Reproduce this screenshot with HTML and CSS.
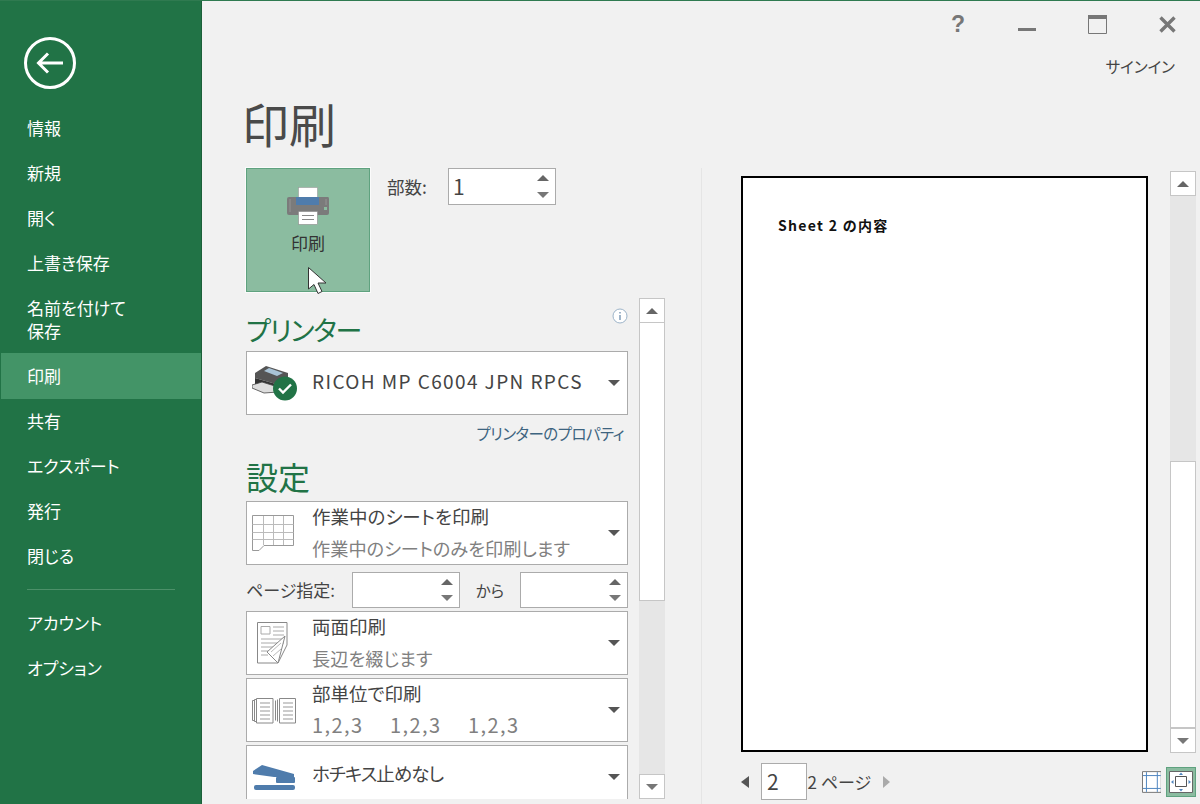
FILE: index.html
```html
<!DOCTYPE html>
<html lang="ja">
<head>
<meta charset="UTF-8">
<title>印刷</title>
<link rel="stylesheet" href="styles.css">
</head>
<body>
<nav class="side">
    <div class="back">
        <svg width="54" height="54" viewBox="0 0 54 54"><circle cx="27" cy="27" r="24.5" fill="none" stroke="#fff" stroke-width="3"/><path d="M15 27H40M25 17.5L15.500 27L25 36.500" fill="none" stroke="#fff" stroke-width="3"/></svg>
    </div>
    <a class="nav-item">情報</a>
    <a class="nav-item">新規</a>
    <a class="nav-item">開く</a>
    <a class="nav-item">上書き保存</a>
    <a class="nav-item two">名前を付けて<br>保存</a>
    <a class="nav-item on">印刷</a>
    <a class="nav-item">共有</a>
    <a class="nav-item">エクスポート</a>
    <a class="nav-item">発行</a>
    <a class="nav-item">閉じる</a>
    <div class="nav-sep"></div>
    <a class="nav-item">アカウント</a>
    <a class="nav-item">オプション</a>
</nav>

<main class="main">
    <div class="winbar">
        <span class="win-help">?</span>
        <svg class="win-min" width="18" height="3"><rect width="18" height="3" fill="#777"/></svg>
        <svg class="win-max" width="19" height="19" viewBox="0 0 19 19"><path d="M.5 .5H18.500V18.500H.5Z" fill="none" stroke="#777"/><rect width="19" height="4" fill="#777"/></svg>
        <svg class="win-close" width="17" height="17" viewBox="0 0 17 17"><path d="M1.500 1.500L15.500 15.500M15.500 1.500L1.500 15.500" stroke="#777" stroke-width="3.400"/></svg>
    </div>
    <div class="signin">サインイン</div>
    <h1 class="title">印刷</h1>

    <div class="body">
        <section class="left">
            <div class="print-row">
                <button class="print-btn" type="button">
                    <svg width="42" height="38" viewBox="0 0 42 38">
                        <rect x="11.500" y=".5" width="19" height="12" fill="#fff" stroke="#999" stroke-width=".6"/>
                        <path d="M2 10H41Q42 10 42 12V26Q42 28 40 28H2Q0 28 0 26V12Q0 10 2 10Z" fill="#7b7b7b"/>
                        <path d="M3 12V25M39 12V18" stroke="#959595"/>
                        <rect x="9" y="10" width="23" height="8" fill="#4f7cac"/>
                        <rect x="37" y="20" width="3" height="3" fill="#8bbca0"/>
                        <rect x="11.500" y="24.500" width="19" height="13" fill="#fff" stroke="#888" stroke-width=".6"/>
                        <path d="M15 28.500H27M15 32.500H27" stroke="#888"/>
                    </svg>
                    <span>印刷</span>
                </button>
                <label class="copies-label">部数:</label>
                <div class="spin copies"><span class="spin-val">1</span><span class="spin-btns"><i class="tri-up"></i><i class="tri-down"></i></span></div>
            </div>
            <div class="panel">
                <div class="settings">
                    <div class="head-row">
                        <h2 class="sub">プリンター</h2>
                        <svg class="info" width="16" height="16" viewBox="0 0 16 16"><circle cx="8" cy="8" r="7" fill="#fff" stroke="#9db4c9"/><path d="M8 7V12M8 4V5.500" stroke="#6f8fae" stroke-width="1.300"/></svg>
                    </div>
                    <div class="drop printer">
                        <div class="drop-icon">
                            <svg width="46" height="36" viewBox="0 0 46 36">
                                <path d="M3 8L14 1L36 8V15L24 19L3 13Z" fill="#555"/>
                                <path d="M12 6L17 3L31 8L25 11Z" fill="#a9c3d6"/>
                                <path d="M3 13L24 19V22L14 24L3 20Z" fill="#333"/>
                                <path d="M0 20L10 17L26 22V27L12 28L0 23Z" fill="#ddd" stroke="#444" stroke-width=".8"/>
                                <circle cx="33" cy="23.500" r="12" fill="#217346"/>
                                <path d="M27 23.500L31 27.500L39 19.500" fill="none" stroke="#fff" stroke-width="2.400"/>
                            </svg>
                        </div>
                        <div class="drop-text"><div class="line1 wide">RICOH MP C6004 JPN RPCS</div></div>
                        <i class="caret"></i>
                    </div>
                    <div class="link-row"><a class="link">プリンターのプロパティ</a></div>
                    <h2 class="sub sub-set">設定</h2>
                    <div class="drop">
                        <div class="drop-icon">
                            <svg width="42" height="36" viewBox="0 0 42 36">
                                <path d="M.5 .5H41.500V30.500H12L7 35.500H.5Z" fill="#fff" stroke="#999"/>
                                <path d="M.5 9.500H41.500M.5 17.500H41.500M.5 24.500H41.500" stroke="#bbb"/>
                                <path d="M11.500 1V30M21.500 1V30M31.500 1V30" stroke="#bbb"/>
                            </svg>
                        </div>
                        <div class="drop-text"><div class="line1">作業中のシートを印刷</div><div class="line2">作業中のシートのみを印刷します</div></div>
                        <i class="caret"></i>
                    </div>
                    <div class="page-row">
                        <span class="page-label">ページ指定:</span>
                        <div class="spin range"><span class="spin-val"></span><span class="spin-btns"><i class="tri-up"></i><i class="tri-down"></i></span></div>
                        <span class="kara">から</span>
                        <div class="spin range"><span class="spin-val"></span><span class="spin-btns"><i class="tri-up"></i><i class="tri-down"></i></span></div>
                    </div>
                    <div class="drop">
                        <div class="drop-icon duplex">
                            <svg width="32" height="44" viewBox="0 0 32 44">
                                <path d="M1.500 1.500H31V24L22 42H1.500Z" fill="#fff" stroke="#888"/>
                                <path d="M5 5.500H14V13H5Z" fill="none" stroke="#aaa"/>
                                <path d="M17 6H28M17 10H28M17 14H28M5 18H28M5 22H28M5 26H20M5 30H14M5 34H12" stroke="#aaa"/>
                                <path d="M11 31L29 15L22 42Z" fill="#fff" stroke="#888"/>
                                <path d="M15 31L25 22M17 35L25 28" stroke="#bbb"/>
                            </svg>
                        </div>
                        <div class="drop-text"><div class="line1">両面印刷</div><div class="line2">長辺を綴じます</div></div>
                        <i class="caret"></i>
                    </div>
                    <div class="drop">
                        <div class="drop-icon">
                            <svg width="44" height="27" viewBox="0 0 44 27">
                                <path d="M.5 3.500H2.500M.5 3.500V23.500H2.500M2.500 2.500H4.500M2.500 2.500V24.500H4.500" fill="none" stroke="#888"/>
                                <path d="M4.500 1.500H21V26H4.500Z" fill="#fff" stroke="#888"/>
                                <path d="M23.500 3.500V23.500M25.500 2.500V24.500" stroke="#888"/>
                                <path d="M27.500 1.500H43.500V26H27.500Z" fill="#fff" stroke="#888"/>
                                <path d="M8 6H18M8 10H18M8 14H18M8 18H18M8 22H18M31 6H41M31 10H41M31 14H41M31 18H41M31 22H41" stroke="#999"/>
                            </svg>
                        </div>
                        <div class="drop-text"><div class="line1">部単位で印刷</div><div class="line2 nums"><span>1,2,3</span><span>1,2,3</span><span>1,2,3</span></div></div>
                        <i class="caret"></i>
                    </div>
                    <div class="drop staple">
                        <div class="drop-icon">
                            <svg width="44" height="25" viewBox="0 0 44 25">
                                <path d="M1 6L10 0L42 9V12H22L1 9Z" fill="#4f7cac"/>
                                <rect x="24" y="12" width="19" height="6" rx="1" fill="#4f7cac"/>
                                <rect x="2" y="20" width="41" height="5" rx="2" fill="#4f7cac"/>
                            </svg>
                        </div>
                        <div class="drop-text"><div class="line1">ホチキス止めなし</div></div>
                        <i class="caret"></i>
                    </div>
                </div>
                <div class="vscroll panel-scroll">
                    <div class="sb-btn"><i class="tri-up"></i></div>
                    <div class="sb-thumb"></div>
                    <div class="sb-track"></div>
                    <div class="sb-btn"><i class="tri-down"></i></div>
                </div>
            </div>
        </section>

        <div class="divider"></div>

        <section class="preview">
            <div class="preview-top">
                <div class="sheet"><p class="sheet-text">Sheet 2 の内容</p></div>
                <div class="vscroll sheet-scroll">
                    <div class="sb-btn"><i class="tri-up"></i></div>
                    <div class="sb-track"></div>
                    <div class="sb-thumb"></div>
                    <div class="sb-btn"><i class="tri-down"></i></div>
                </div>
            </div>
            <div class="pager">
                <i class="arrow-left"></i>
                <div class="page-input">2</div>
                <span class="page-total">2 ページ</span>
                <i class="arrow-right"></i>
                <svg class="margins" width="20" height="22" viewBox="0 0 20 22"><path d="M.5 .5H19.500V21.500H.5Z" fill="#fff" stroke="#777"/><path d="M4.500 1V21M15.500 1V21M1 4.500H19M1 17.500H19" stroke="#4f86c0"/></svg>
                <div class="fit">
                    <svg width="24" height="22" viewBox="0 0 24 22"><path d="M.5 .5H23.500V21.500H.5Z" fill="#fff" stroke="#666"/><path d="M6.500 5.500H17.500V15.500H6.500Z" fill="none" stroke="#555"/><path d="M12 1.500L10 4H14ZM12 20.500L10 18H14ZM2 11L4.500 9V13ZM22 11L19.500 9V13Z" fill="#4f86c0"/></svg>
                </div>
            </div>
        </section>
    </div>

    <svg class="cursor" width="22" height="30" viewBox="0 0 22 30"><path d="M1.500 1.500V23L7 18.500L11 27.500L15 25.500L11 17H19Z" fill="#fff" stroke="#333"/></svg>
</main>
</body>
</html>
```

FILE: styles.css
```css
*{box-sizing:border-box;}
html,body{height:100%;}
body{
    margin:0;
    display:flex;
    overflow:hidden;
    height:804px;
    background:#f1f1f1;
    font-family:"Noto Sans CJK JP","Noto Sans",sans-serif;
    font-feature-settings:"palt";
    color:#444;
    border-top:1px solid #2f7a50;
}
i{display:block;}

/* sidebar */
.side{
    width:202px;
    flex:none;
    background:#217346;
    border-right:1px solid #1b6039;
    color:#fff;
}
.back{padding:35px 0 0 23px;height:105px;}
.nav-item{
    display:block;
    height:45px;
    padding-left:27px;
    font-size:17px;
    line-height:43px;
    color:#fff;
    white-space:nowrap;
}
.nav-item.two{height:67px;padding-top:10px;line-height:23px;}
.nav-item.on{background:#439467;margin-left:1px;padding-left:26px;height:46px;line-height:45px;}
.nav-sep{height:1px;margin:10px 26px 11px 27px;background:#4c9069;}

/* main */
.main{flex:1;position:relative;min-width:0;}
.winbar{display:flex;align-items:flex-start;height:47px;position:relative;padding-left:749px;}
.win-help{font:bold 23px/24px "Liberation Sans",sans-serif;color:#777;margin-top:11px;}
.win-min{margin:27px 0 0 53px;}
.win-max{margin:14px 0 0 52px;}
.win-close{margin:15px 0 0 52px;}
.signin{font-size:15.500px;line-height:22px;text-align:right;padding-right:25px;height:22px;margin-top:7px;color:#444;}
.title{
    margin:14px 0 0 40px;
    height:77px;
    font-size:47px;
    font-weight:400;
    line-height:64px;
    color:#4a4a4a;
}
.body{display:flex;height:636px;padding-left:44px;}

/* left column */
.left{width:419px;flex:none;}
.print-row{display:flex;align-items:flex-start;height:130px;}
.print-btn{
    width:124px;
    height:124px;
    padding:18px 0 0;
    background:#8bbca0;
    border:1px solid #5fa27f;
    outline:1px solid #fbfbfb;
    font-family:inherit;
    font-feature-settings:inherit;
    font-size:17px;
    line-height:22px;
    color:#333;
    display:flex;
    flex-direction:column;
    align-items:center;
    gap:7px;
}
.copies-label{font-size:17.500px;line-height:24px;margin:7px 0 0 17px;width:61px;}
.spin{display:flex;background:#fff;border:1px solid #ababab;}
.spin-val{flex:1;font-size:21px;line-height:34px;padding-left:4px;color:#444;}
.spin-btns{display:flex;flex-direction:column;justify-content:space-between;width:23px;padding:6px 0 6px 5px;}
.copies{width:108px;height:37px;}
.tri-up{width:0;height:0;border:6px solid transparent;border-top:0;border-bottom:6px solid #666;}
.tri-down{width:0;height:0;border:6px solid transparent;border-bottom:0;border-top:6px solid #777;}
.panel{display:flex;gap:11px;height:501px;}
.settings{width:382px;flex:none;overflow:hidden;}
.head-row{display:flex;justify-content:space-between;height:53px;}
.sub{margin:0;font-size:27px;font-weight:400;line-height:38px;color:#217346;letter-spacing:-1.200px;}
.head-row .sub{margin-top:13px;}
.info{margin:10px 0 0 0;}
.drop{display:flex;height:64px;background:#fff;border:1px solid #ababab;margin-bottom:3px;align-items:center;}
.drop-icon{width:65px;flex:none;display:flex;padding-left:5px;}
.drop-icon.duplex{padding-left:9px;}
.drop-text{flex:1;min-width:0;margin-top:-2px;}
.line1{font-size:18.500px;line-height:26px;color:#444;}
.line1:only-child{margin-bottom:2px;}
.staple .line1:only-child{margin-bottom:6px;letter-spacing:-1px;}
.line2{font-size:18.200px;line-height:26px;color:#808080;margin-top:6px;}
.line1.wide{letter-spacing:1.400px;font-size:19px;}
.nums{display:flex;font-size:20px;letter-spacing:1.400px;}
.nums span{width:78px;}
.caret{width:0;height:0;border:6.500px solid transparent;border-bottom:0;border-top:6px solid #555;margin-right:7px;}
.printer{margin-bottom:0;}
.link-row{text-align:right;height:38px;padding:6px 4px 0 0;}
.link{font-size:15.500px;line-height:24px;color:#3d6480;letter-spacing:-.550px;}
.sub-set{height:48px;line-height:46px;font-size:32px;letter-spacing:0;}
.page-row{display:flex;align-items:flex-start;height:36px;margin-top:7px;margin-bottom:3px;}
.page-label{font-size:17px;line-height:36px;width:106px;}
.range{width:108px;height:36px;}
.kara{font-size:15.500px;line-height:36px;width:60px;text-align:center;}

/* scrollbars */
.vscroll{display:flex;flex-direction:column;width:26px;flex:none;background:#e6e6e6;}
.sb-btn{height:25px;background:#fff;border:1px solid #c6c6c6;display:flex;align-items:center;justify-content:center;flex:none;}
.sb-thumb{background:#fff;border:1px solid #c6c6c6;border-top:0;flex:none;}
.sb-track{flex:1;}
.panel-scroll .sb-thumb{height:278px;}
.sheet-scroll .sb-thumb{height:267px;border-top:1px solid #c6c6c6;}

/* divider + preview */
.divider{width:1px;background:#e5e5e5;margin-left:36px;flex:none;}
.preview{margin-left:39px;width:455px;flex:none;}
.preview-top{display:flex;padding-top:8px;height:583px;}
.sheet{width:407px;height:576px;background:#fff;border:2px solid #000;padding:37px 0 0 35px;}
.sheet-text{margin:0;font-size:14px;font-weight:700;line-height:20px;color:#111;letter-spacing:1.300px;font-feature-settings:normal;}
.sheet-scroll{margin:-5px 0 0 22px;height:582px;}
.pager{display:flex;align-items:center;height:37px;margin-top:12px;}
.arrow-left{width:0;height:0;border:6px solid transparent;border-left:0;border-right:8px solid #555;}
.arrow-right{width:0;height:0;border:6px solid transparent;border-right:0;border-left:7px solid #aaa;margin-left:13px;}
.page-input{width:46px;height:37px;margin-left:12px;background:#fff;border:1px solid #ababab;font-size:21px;line-height:35px;padding-left:5px;}
.page-total{font-size:17px;line-height:37px;width:63px;padding-left:1px;white-space:nowrap;}
.margins{margin-left:252px;}
.fit{width:30px;height:30px;margin-left:5px;background:#8bbca0;border:1px solid #5fa27f;display:flex;align-items:center;justify-content:center;}

.cursor{position:absolute;left:105px;top:265px;}
```
